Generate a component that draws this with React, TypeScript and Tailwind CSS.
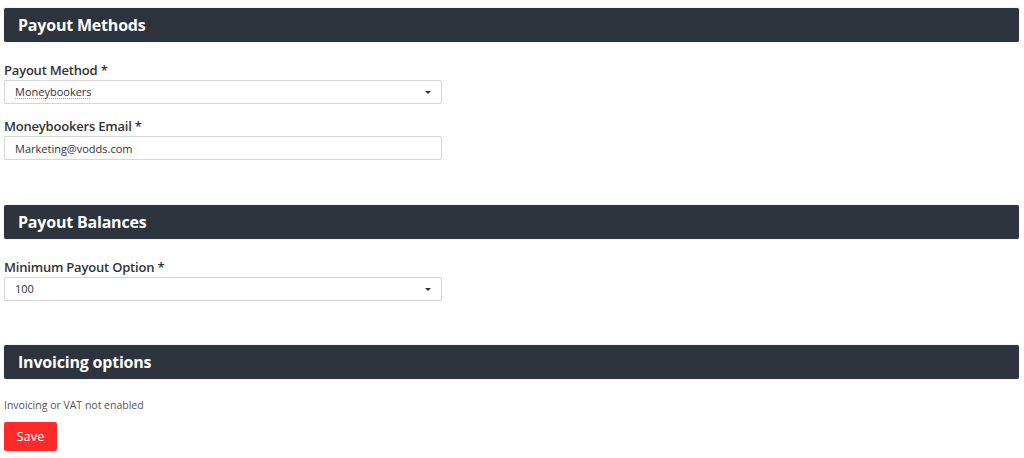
import { ReactNode } from "react";

const SectionHeader = ({ title }: { title: string }) => (
  <div className="flex h-[34px] items-center rounded-[2px] bg-[#2e343d] pl-[14px] shadow-[0_0_1px_rgba(0,0,0,0.4)]">
    <h2 className="text-[16px] font-bold tracking-[-0.2px] text-white">{title}</h2>
  </div>
);

const Label = ({ children }: { children: ReactNode }) => (
  <label className="mb-px block h-[18px] text-[13px] font-semibold leading-[18px] tracking-[-0.2px] text-[#333]">
    {children}
  </label>
);

const SelectBox = ({ value, spell }: { value: string; spell?: boolean }) => (
  <div className="flex h-[24px] w-[438px] items-center justify-between rounded-[2px] border border-[#d6d6d6] bg-white pl-[10px] pr-[10px] text-[11px] text-[#333]">
    <span
      className={
        spell
          ? "underline decoration-[#f08080] decoration-dotted decoration-[1px] underline-offset-[2px]"
          : ""
      }
    >
      {value}
    </span>
    <svg width="6" height="3" viewBox="0 0 6 3">
      <path d="M0 0h6L3 3z" fill="#333" />
    </svg>
  </div>
);

export default function App() {
  return (
    <div className="min-h-[458px] bg-white pl-[4px] pr-[5px] pt-[8px] font-['Open_Sans',sans-serif]">
      <SectionHeader title="Payout Methods" />
      <div className="mt-[19px]">
        <Label>Payout Method *</Label>
        <SelectBox value="Moneybookers" spell />
      </div>
      <div className="mt-[13px]">
        <Label>Moneybookers Email *</Label>
        <input
          type="text"
          defaultValue="Marketing@vodds.com"
          className="block h-[24px] w-[438px] rounded-[2px] border border-[#d6d6d6] bg-white pl-[10px] text-[11px] text-[#333] outline-none"
        />
      </div>

      <div className="mt-[45px]">
        <SectionHeader title="Payout Balances" />
      </div>
      <div className="mt-[19px]">
        <Label>Minimum Payout Option *</Label>
        <SelectBox value="100" />
      </div>

      <div className="mt-[44px]">
        <SectionHeader title="Invoicing options" />
      </div>
      <p className="mt-[18px] h-[16px] text-[10.5px] leading-[16px] text-[#555]">
        Invoicing or VAT not enabled
      </p>
      <button className="mt-[9px] h-[29px] w-[53px] rounded-[2px] bg-[#ff2a2a] text-[13px] text-white">
        Save
      </button>
    </div>
  );
}
